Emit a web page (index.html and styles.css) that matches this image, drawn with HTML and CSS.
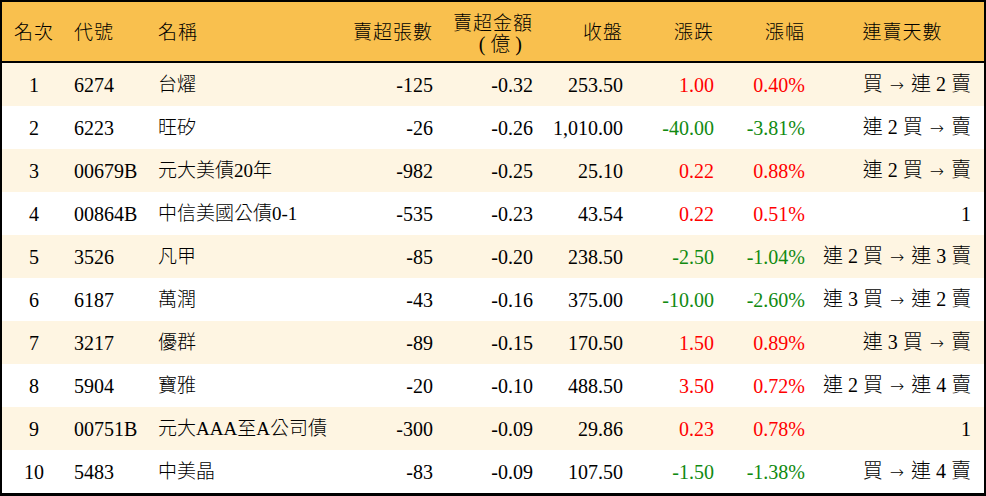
FILE: index.html
```html
<!DOCTYPE html>
<html lang="zh-Hant">
<head>
<meta charset="utf-8">
<link rel="stylesheet" href="styles.css">
</head>
<body>
<div class="frame">
  <div class="row head">
    <div class="ctr">名次</div>
    <div class="lft">代號</div>
    <div class="lft">名稱</div>
    <div class="rgt">賣超張數</div>
    <div class="rgt two"><span>賣超金額</span><span class="paren">( 億 )</span></div>
    <div class="rgt">收盤</div>
    <div class="rgt">漲跌</div>
    <div class="rgt">漲幅</div>
    <div class="ctr days">連賣天數</div>
  </div>
  <div class="row odd"><div class="ctr">1</div><div>6274</div><div class="nm">台燿</div><div class="rgt">-125</div><div class="rgt">-0.32</div><div class="rgt">253.50</div><div class="rgt up">1.00</div><div class="rgt up">0.40%</div><div class="rgt last">買 <span class="arr">→</span> 連 2 賣</div></div>
  <div class="row"><div class="ctr">2</div><div>6223</div><div class="nm">旺矽</div><div class="rgt">-26</div><div class="rgt">-0.26</div><div class="rgt">1,010.00</div><div class="rgt dn">-40.00</div><div class="rgt dn">-3.81%</div><div class="rgt last">連 2 買 <span class="arr">→</span> 賣</div></div>
  <div class="row odd"><div class="ctr">3</div><div>00679B</div><div class="nm">元大美債20年</div><div class="rgt">-982</div><div class="rgt">-0.25</div><div class="rgt">25.10</div><div class="rgt up">0.22</div><div class="rgt up">0.88%</div><div class="rgt last">連 2 買 <span class="arr">→</span> 賣</div></div>
  <div class="row"><div class="ctr">4</div><div>00864B</div><div class="nm">中信美國公債0-1</div><div class="rgt">-535</div><div class="rgt">-0.23</div><div class="rgt">43.54</div><div class="rgt up">0.22</div><div class="rgt up">0.51%</div><div class="rgt last">1</div></div>
  <div class="row odd"><div class="ctr">5</div><div>3526</div><div class="nm">凡甲</div><div class="rgt">-85</div><div class="rgt">-0.20</div><div class="rgt">238.50</div><div class="rgt dn">-2.50</div><div class="rgt dn">-1.04%</div><div class="rgt last">連 2 買 <span class="arr">→</span> 連 3 賣</div></div>
  <div class="row"><div class="ctr">6</div><div>6187</div><div class="nm">萬潤</div><div class="rgt">-43</div><div class="rgt">-0.16</div><div class="rgt">375.00</div><div class="rgt dn">-10.00</div><div class="rgt dn">-2.60%</div><div class="rgt last">連 3 買 <span class="arr">→</span> 連 2 賣</div></div>
  <div class="row odd"><div class="ctr">7</div><div>3217</div><div class="nm">優群</div><div class="rgt">-89</div><div class="rgt">-0.15</div><div class="rgt">170.50</div><div class="rgt up">1.50</div><div class="rgt up">0.89%</div><div class="rgt last">連 3 買 <span class="arr">→</span> 賣</div></div>
  <div class="row"><div class="ctr">8</div><div>5904</div><div class="nm">寶雅</div><div class="rgt">-20</div><div class="rgt">-0.10</div><div class="rgt">488.50</div><div class="rgt up">3.50</div><div class="rgt up">0.72%</div><div class="rgt last">連 2 買 <span class="arr">→</span> 連 4 賣</div></div>
  <div class="row odd"><div class="ctr">9</div><div>00751B</div><div class="nm">元大AAA至A公司債</div><div class="rgt">-300</div><div class="rgt">-0.09</div><div class="rgt">29.86</div><div class="rgt up">0.23</div><div class="rgt up">0.78%</div><div class="rgt last">1</div></div>
  <div class="row"><div class="ctr">10</div><div>5483</div><div class="nm">中美晶</div><div class="rgt">-83</div><div class="rgt">-0.09</div><div class="rgt">107.50</div><div class="rgt dn">-1.50</div><div class="rgt dn">-1.38%</div><div class="rgt last">買 <span class="arr">→</span> 連 4 賣</div></div>
</div>
</body>
</html>
```

FILE: styles.css
```css
html, body {
  margin: 0;
  padding: 0;
  background: #ffffff;
}
.frame {
  width: 982px;
  border: 2px solid #000;
  border-bottom-width: 3px;
  background: #fff;
  font-family: "Liberation Serif", "Noto Sans CJK TC", serif;
  font-size: 20px;
  color: #000;
}
.row {
  display: grid;
  grid-template-columns: 64px 84px 190px 103px 100px 90px 91px 91px 169px;
  height: 43px;
  align-items: center;
}
.row > div {
  padding: 0 10px 0 8px;
  white-space: nowrap;
  line-height: 22px;
  font-weight: 300;
}
.row.odd { background: #fef5e2; }
.row.head {
  height: 59px;
  background: #f9c04e;
  border-bottom: 2px solid #000;
}
.row.head > div {
  font-size: 19px;
  letter-spacing: 1px;
  line-height: 20px;
  padding-top: 2px;
}
.row.head > div.two {
  display: flex;
  flex-direction: column;
  align-items: flex-end;
  line-height: 21px;
  padding-top: 4px;
}
.row.head .paren {
  letter-spacing: 0;
  margin-right: 11px;
  font-size: 20px;
}
.row > div.ctr { text-align: center; padding-left: 0; padding-right: 0; }
.row > div.days { padding-left: 6px; }
.row > div.last { padding-right: 13px; }
.lft { text-align: left; }
.rgt { text-align: right; }
.nm { font-size: 19px; }
.arr {
  font-family: "DejaVu Sans", sans-serif;
  font-size: 17px;
  margin: 0 2px;
}
.up { color: #ff0000; }
.dn { color: #118a11; }
```
